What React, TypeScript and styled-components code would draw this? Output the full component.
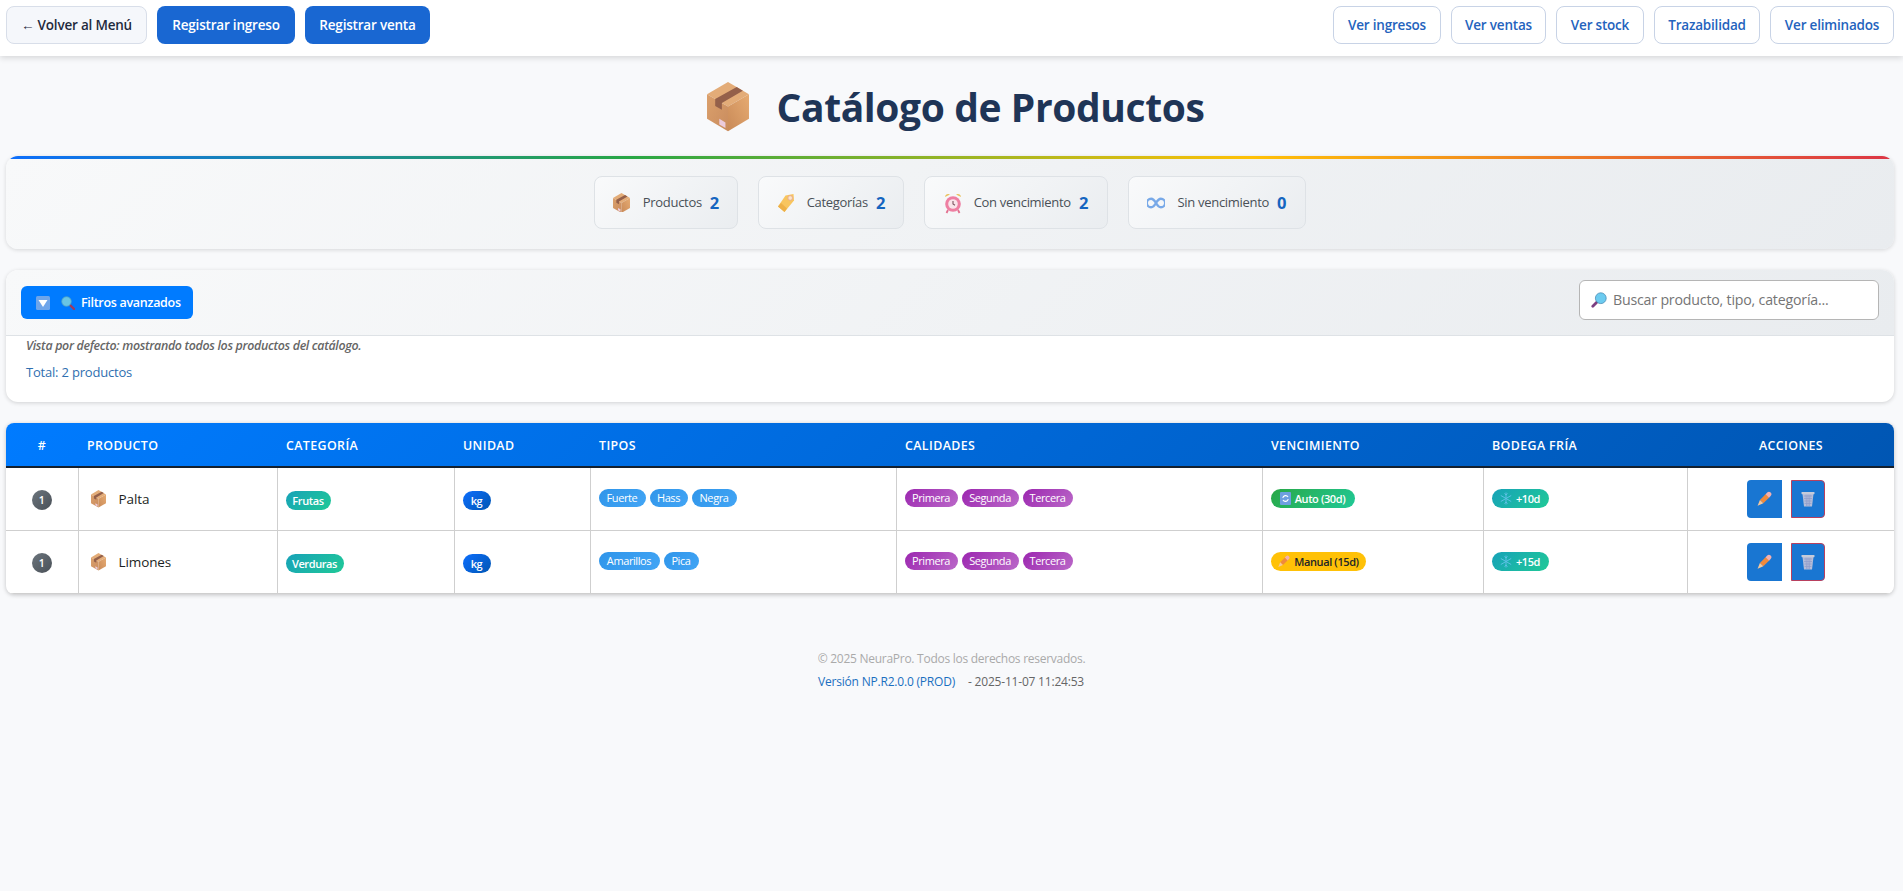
import React, { useId } from "react";
import styled, { createGlobalStyle } from "styled-components";

const FONT = `"Open Sans", "Noto Sans", "Liberation Sans", sans-serif`;

const Global = createGlobalStyle`
  html, body { margin: 0; padding: 0; background: #f8f9fb; }
  body { font-family: ${FONT}; color: #212529; min-height: 891px; }
  * { box-sizing: border-box; }
`;

const Page = styled.div`
  width: 1903px;
  min-height: 891px;
  background: #f8f9fb;
`;

const TopBar = styled.header`
  height: 56px;
  background: #fff;
  box-shadow: 0 2px 6px rgba(0, 0, 0, 0.14);
  display: flex;
  align-items: flex-start;
  justify-content: space-between;
  padding: 6px 9px 0 6px;
`;

const ButtonGroup = styled.div<{ $gap: number }>`
  display: flex;
  gap: ${(p) => p.$gap}px;
`;

const NavButton = styled.button<{ $kind: "back" | "primary" | "outline"; $w: number }>`
  height: 38px;
  width: ${(p) => p.$w}px;
  padding: 0;
  border-radius: 8px;
  font-family: ${FONT};
  font-size: 13.5px;
  font-weight: 600;
  letter-spacing: -0.2px;
  white-space: nowrap;
  background: ${(p) => (p.$kind === "back" ? "#f5f7fb" : p.$kind === "primary" ? "#1967d2" : "#fff")};
  color: ${(p) => (p.$kind === "back" ? "#1f2a3d" : p.$kind === "primary" ? "#fff" : "#2463bd")};
  border: ${(p) =>
    p.$kind === "back" ? "1px solid #d8dee9" : p.$kind === "primary" ? "none" : "1px solid #c8d3e6"};
`;

const TitleRow = styled.div`
  height: 100px;
  display: flex;
  align-items: center;
  justify-content: center;
  gap: 28px;
  padding: 2px 0 0 8px;
`;

const Title = styled.h1`
  margin: 0;
  font-size: 39px;
  font-weight: 700;
  letter-spacing: -0.4px;
  color: #1f3557;
  line-height: 50px;
`;

const Content = styled.main`
  padding: 0 9px 0 6px;
  display: flex;
  flex-direction: column;
  gap: 21px;
`;

const StatsPanel = styled.section`
  position: relative;
  height: 93px;
  border-radius: 12px;
  overflow: hidden;
  background: linear-gradient(135deg, #f8f9fa 0%, #e9ecef 100%);
  box-shadow: 0 1px 4px rgba(0, 0, 0, 0.14);
  display: flex;
  justify-content: center;
  gap: 20px;
  padding: 20px 0 0 0;
  &::before {
    content: "";
    position: absolute;
    left: 0;
    right: 0;
    top: 0;
    height: 3px;
    background: linear-gradient(90deg, #0d6efd 0%, #28a745 33%, #ffc107 66%, #dc3545 100%);
  }
`;

const StatChip = styled.div<{ $w: number }>`
  width: ${(p) => p.$w}px;
  height: 53px;
  border: 1px solid #dee2e6;
  border-radius: 8px;
  background: linear-gradient(135deg, #f9fafb 0%, #eaedf0 100%);
  display: flex;
  align-items: center;
  justify-content: center;
  gap: 8px;
`;

const StatIcon = styled.span`
  display: flex;
  width: 18px;
  justify-content: center;
  margin-right: 4px;
`;

const StatLabel = styled.span`
  font-size: 13px;
  font-weight: 500;
  letter-spacing: -0.3px;
  line-height: 18px;
  margin-top: -1px;
  color: #495057;
`;

const StatValue = styled.span`
  font-size: 16.5px;
  font-weight: 700;
  line-height: 20px;
  color: #1565c0;
`;

const FilterPanel = styled.section`
  height: 132px;
  border-radius: 12px;
  overflow: hidden;
  background: #fff;
  box-shadow: 0 1px 4px rgba(0, 0, 0, 0.16);
`;

const FilterHead = styled.div`
  height: 66px;
  display: flex;
  align-items: center;
  justify-content: space-between;
  padding: 0 15px;
  background: linear-gradient(135deg, #f8f9fa 0%, #e9ecef 100%);
  border-bottom: 1px solid #dee2e6;
`;

const FilterButton = styled.button`
  width: 172px;
  height: 33px;
  border: none;
  border-radius: 6px;
  background: #007bff;
  color: #fff;
  font-family: ${FONT};
  font-size: 12.5px;
  font-weight: 600;
  letter-spacing: -0.3px;
  display: flex;
  align-items: center;
  padding: 0 0 0 15px;
  gap: 6px;
  white-space: nowrap;
`;

const Caret = styled.span`
  display: flex;
  margin-right: 5px;
`;

const SearchBox = styled.label`
  width: 300px;
  height: 40px;
  margin-top: -6px;
  background: #fff;
  border: 1px solid #b5b5b5;
  border-radius: 6px;
  display: flex;
  align-items: center;
  padding-left: 11px;
  gap: 6px;
`;

const SearchInput = styled.input`
  flex: 1;
  min-width: 0;
  border: none;
  outline: none;
  background: transparent;
  font-family: ${FONT};
  font-size: 14.2px;
  letter-spacing: -0.2px;
  padding: 0;
  &::placeholder {
    color: #757575;
    opacity: 1;
  }
`;

const FilterBody = styled.div`
  padding: 1px 20px 0;
`;

const Hint = styled.div`
  font-size: 12.4px;
  font-style: italic;
  font-weight: 600;
  letter-spacing: -0.32px;
  line-height: 17px;
  color: #666;
`;

const Total = styled.div`
  margin-top: 10px;
  font-size: 13px;
  font-weight: 500;
  letter-spacing: -0.2px;
  line-height: 17px;
  color: #2f6fb0;
`;

const TableWrap = styled.div`
  border-radius: 8px;
  overflow: hidden;
  box-shadow: 0 1px 4px rgba(0, 0, 0, 0.22);
  background: #fff;
`;

const Table = styled.table`
  width: 100%;
  border-collapse: collapse;
  table-layout: fixed;
`;

const HeadRow = styled.tr`
  height: 44px;
  background: linear-gradient(135deg, #007bff 0%, #0056b3 100%);
`;

const Th = styled.th<{ $center?: boolean }>`
  padding: 1px 0 0 9px;
  border-bottom: 2px solid #14202e;
  color: #fff;
  font-size: 12.4px;
  font-weight: 600;
  letter-spacing: 0.4px;
  text-transform: uppercase;
  text-align: ${(p) => (p.$center ? "center" : "left")};
  ${(p) => (p.$center ? "padding-left: 0;" : "")}
`;

const Td = styled.td<{ $center?: boolean }>`
  height: 63px;
  padding: 0 0 0 8px;
  border: 1px solid #cfcfcf;
  text-align: ${(p) => (p.$center ? "center" : "left")};
  ${(p) => (p.$center ? "padding-left: 0;" : "")}
  &:first-child { border-left: none; }
  &:last-child { border-right: none; }
`;

const Num = styled.span`
  display: inline-flex;
  width: 20px;
  height: 20px;
  border-radius: 50%;
  align-items: center;
  justify-content: center;
  background: linear-gradient(135deg, #6c757d 0%, #495057 100%);
  color: #fff;
  font-size: 10.5px;
  font-weight: 600;
`;

const ProductCell = styled.div`
  display: flex;
  align-items: center;
  gap: 13px;
  padding: 1px 0 0 4px;
  font-size: 13.5px;
  font-weight: 500;
  letter-spacing: -0.1px;
  color: #1c1f23;
`;

const Pill = styled.span<{ $bg: string; $dark?: boolean; $w: number }>`
  display: inline-flex;
  align-items: center;
  justify-content: center;
  gap: 4px;
  height: 19px;
  width: ${(p) => p.$w}px;
  border-radius: 10px;
  background: ${(p) => p.$bg};
  color: ${(p) => (p.$dark ? "#212529" : "#fff")};
  font-size: 11px;
  font-weight: 600;
  letter-spacing: -0.4px;
  white-space: nowrap;
`;

const PillRow = styled.div`
  display: flex;
  gap: 4px;
  margin-top: -2px;
`;

const SmallPill = styled(Pill)`
  height: 18px;
  font-weight: 500;
`;

const Actions = styled.div`
  display: flex;
  justify-content: center;
  gap: 9px;
  padding-right: 11px;
`;

const ActionButton = styled.button<{ $danger?: boolean; $w: number }>`
  width: ${(p) => p.$w}px;
  height: 38px;
  padding: 0;
  background: #1976d2;
  display: flex;
  align-items: center;
  justify-content: center;
  border: ${(p) => (p.$danger ? "1px solid #b8405e" : "none")};
  border-radius: ${(p) => (p.$danger ? "0 4px 4px 0" : "4px 0 0 4px")};
`;

const Footer = styled.footer`
  margin-top: 56px;
  display: flex;
  flex-direction: column;
  align-items: center;
  gap: 6px;
`;

const Copy = styled.div`
  font-size: 12px;
  letter-spacing: -0.27px;
  line-height: 17px;
  color: #aaa;
`;

const Version = styled.div`
  display: flex;
  gap: 13px;
  padding-right: 1px;
  font-size: 12px;
  letter-spacing: -0.2px;
  line-height: 17px;
  color: #666;
`;

const VersionTag = styled.span`
  color: #1a6fc0;
  font-weight: 500;
`;

/* ---------- drawings ---------- */

const BoxIcon = ({ size }: { size: number }) => {
  const id = useId();
  return (
    <svg width={size} height={size * 1.17} viewBox="0 0 41 48" aria-hidden="true">
      <defs>
        <linearGradient id={id + "r"} x1="0" y1="1" x2="1" y2="0">
          <stop offset="0" stopColor="#c98a58" />
          <stop offset="1" stopColor="#e6ab72" />
        </linearGradient>
        <linearGradient id={id + "l"} x1="0" y1="0" x2="1" y2="1">
          <stop offset="0" stopColor="#dba06c" />
          <stop offset="1" stopColor="#c98c5e" />
        </linearGradient>
      </defs>
      <polygon points="20.5,0 41,12 20.5,24 0,12" fill="#e3ac78" />
      <polygon points="0,12 20.5,24 20.5,48 0,36" fill={`url(#${id}l)`} />
      <polygon points="41,12 20.5,24 20.5,48 41,36" fill={`url(#${id}r)`} />
      <polygon points="29,5 35,8.5 14.5,20.5 14.5,27 8,23.5 8,16.5" fill="#94604a" />
      <polygon points="12,36 18,39.5 18,45 12,41.5" fill="#eccbdc" />
    </svg>
  );
};

const TagIcon = () => (
  <svg width="18" height="20" viewBox="0 0 18 20" aria-hidden="true">
    <path d="M8.5 2.5 L16.5 1 L17 7.5 L7.5 19 L1 13.5 Z" fill="#f8c55f" />
    <path d="M7.5 19 L1 13.5 L4 10 L10 15.5 Z" fill="#eeb047" />
    <circle cx="13.2" cy="5" r="2.3" fill="#fbe7c6" stroke="#e3a3a0" strokeWidth="0.8" />
  </svg>
);

const AlarmIcon = () => (
  <svg width="18" height="22" viewBox="0 0 18 22" aria-hidden="true">
    <path d="M1 5 a3.4 3.4 0 0 1 5-2.6 Z" fill="#eac05a" />
    <path d="M17 5 a3.4 3.4 0 0 0-5-2.6 Z" fill="#eac05a" />
    <path d="M4 18 L2.5 21 M14 18 L15.5 21" stroke="#e2708f" strokeWidth="1.8" />
    <circle cx="9" cy="12" r="7.8" fill="#ee7fa2" />
    <circle cx="9" cy="12" r="4.8" fill="#f9e4ea" />
    <path d="M9 9 V12 L11 13.2" stroke="#7d5560" strokeWidth="1.1" fill="none" />
  </svg>
);

const InfinityIcon = () => (
  <svg width="19" height="12" viewBox="0 0 19 12" aria-hidden="true">
    <path
      d="M9.5 6 C7.5 2.5 6 1.5 4.3 1.5 A4.5 4.5 0 0 0 4.3 10.5 C6 10.5 7.5 9.5 9.5 6 C11.5 2.5 13 1.5 14.7 1.5 A4.5 4.5 0 0 1 14.7 10.5 C13 10.5 11.5 9.5 9.5 6 Z"
      fill="none"
      stroke="#78a9e8"
      strokeWidth="2.5"
    />
  </svg>
);

const DownButton = () => (
  <svg width="14" height="14" viewBox="0 0 14 14" aria-hidden="true">
    <rect width="14" height="14" rx="1.5" fill="#6ea5ea" />
    <polygon points="2.5,4 11.5,4 7,11" fill="#fff" />
  </svg>
);

const MagLeft = () => (
  <svg width="14" height="14" viewBox="0 0 14 14" aria-hidden="true">
    <path d="M8.5 8.5 L13 13" stroke="#a13a5e" strokeWidth="2.4" strokeLinecap="round" />
    <circle cx="5.5" cy="5.5" r="4.8" fill="#69c5e4" stroke="#4d9fc4" strokeWidth="0.8" />
  </svg>
);

const MagRight = () => (
  <svg width="16" height="16" viewBox="0 0 16 16" aria-hidden="true">
    <path d="M6.5 9.5 L1.8 14.2" stroke="#7c3f80" strokeWidth="2.8" strokeLinecap="round" />
    <circle cx="9.8" cy="6.2" r="5.4" fill="#6ccbf0" stroke="#4a8fb8" strokeWidth="0.8" />
  </svg>
);

const RepeatIcon = () => (
  <svg width="11" height="13" viewBox="0 0 11 13" aria-hidden="true">
    <rect width="11" height="13" rx="1" fill="#6e9fe0" />
    <path d="M2.8 6 A2.8 2.8 0 0 1 8 5 M8.2 7 A2.8 2.8 0 0 1 3 8" fill="none" stroke="#fff" strokeWidth="1.1" />
  </svg>
);

const Snow = () => (
  <svg width="12" height="13" viewBox="0 0 12 13" aria-hidden="true">
    <path
      d="M6 .5 V12.5 M.8 3.5 L11.2 9.5 M11.2 3.5 L.8 9.5 M4.5 1.5 L6 3 L7.5 1.5 M4.5 11.5 L6 10 L7.5 11.5"
      stroke="#5cc0e4"
      strokeWidth="1"
      fill="none"
    />
  </svg>
);

const PencilIcon = ({ size }: { size: number }) => (
  <svg width={size} height={size} viewBox="0 0 14 14" aria-hidden="true">
    <path d="M3.4 7.8 L8.6 2.6 L11.6 5.6 L6.4 10.8 Z" fill="#f08a3c" />
    <path d="M8.4 2.8 L9.8 1.4 A1.6 1.6 0 0 1 12.8 4.4 L11.4 5.8 Z" fill="#f3b0b0" />
    <path d="M3.4 7.8 L6.4 10.8 L1.4 13 Z" fill="#f5c79a" />
  </svg>
);

const TrashIcon = () => (
  <svg width="14" height="16" viewBox="0 0 14 16" aria-hidden="true">
    <path d="M1.5 3 H12.5 L11 15.5 H3 Z" fill="#b4bdd8" />
    <path
      d="M3 5 H11 M3 7.5 H11 M3.4 10 H10.6 M3.6 12.5 H10.4 M5 3.5 L5.6 15 M7 3.5 V15 M9 3.5 L8.4 15"
      stroke="#8f9ccb"
      strokeWidth="0.7"
    />
    <rect x="0.5" y="1" width="13" height="2.2" rx="0.6" fill="#c6cbd9" />
  </svg>
);

/* ---------- data ---------- */

const COLS = [72, 199, 177, 136, 306, 366, 221, 204, 208];
const HEADS = ["#", "Producto", "Categoría", "Unidad", "Tipos", "Calidades", "Vencimiento", "Bodega fría", "Acciones"];

const TEAL = "linear-gradient(135deg, #17a2b8 0%, #20c997 100%)";
const BLUE = "linear-gradient(135deg, #0d6efd 0%, #0056b3 100%)";
const SKY = "linear-gradient(135deg, #2f95ea 0%, #42a5f5 100%)";
const PURPLE = "linear-gradient(135deg, #9c27b0 0%, #ba68c8 100%)";
const GREEN = "linear-gradient(135deg, #28a745 0%, #20c997 100%)";

const QUALITIES: [string, number][] = [["Primera", 53], ["Segunda", 57], ["Tercera", 50]];

const ROWS = [
  {
    name: "Palta",
    cat: ["Frutas", 45] as [string, number],
    types: [["Fuerte", 47], ["Hass", 38], ["Negra", 45]] as [string, number][],
    exp: <Pill $bg={GREEN} $w={84}><RepeatIcon />Auto (30d)</Pill>,
    cold: "+10d",
  },
  {
    name: "Limones",
    cat: ["Verduras", 58] as [string, number],
    types: [["Amarillos", 61], ["Pica", 35]] as [string, number][],
    exp: <Pill $bg="#ffc107" $dark $w={95}><PencilIcon size={13} />Manual (15d)</Pill>,
    cold: "+15d",
  },
];

const STATS = [
  { icon: <BoxIcon size={17} />, label: "Productos", value: 2, w: 144 },
  { icon: <TagIcon />, label: "Categorías", value: 2, w: 146 },
  { icon: <AlarmIcon />, label: "Con vencimiento", value: 2, w: 184 },
  { icon: <InfinityIcon />, label: "Sin vencimiento", value: 0, w: 178 },
];

export default function App() {
  return (
    <Page>
      <Global />
      <TopBar>
        <ButtonGroup $gap={10}>
          <NavButton $kind="back" $w={141}>← Volver al Menú</NavButton>
          <NavButton $kind="primary" $w={138}>Registrar ingreso</NavButton>
          <NavButton $kind="primary" $w={125}>Registrar venta</NavButton>
        </ButtonGroup>
        <ButtonGroup $gap={10}>
          <NavButton $kind="outline" $w={108}>Ver ingresos</NavButton>
          <NavButton $kind="outline" $w={95}>Ver ventas</NavButton>
          <NavButton $kind="outline" $w={88}>Ver stock</NavButton>
          <NavButton $kind="outline" $w={106}>Trazabilidad</NavButton>
          <NavButton $kind="outline" $w={124}>Ver eliminados</NavButton>
        </ButtonGroup>
      </TopBar>

      <TitleRow>
        <BoxIcon size={42} />
        <Title>Catálogo de Productos</Title>
      </TitleRow>

      <Content>
        <StatsPanel>
          {STATS.map((s) => (
            <StatChip key={s.label} $w={s.w}>
              <StatIcon>{s.icon}</StatIcon>
              <StatLabel>{s.label}</StatLabel>
              <StatValue>{s.value}</StatValue>
            </StatChip>
          ))}
        </StatsPanel>

        <FilterPanel>
          <FilterHead>
            <FilterButton>
              <Caret><DownButton /></Caret>
              <MagLeft />
              Filtros avanzados
            </FilterButton>
            <SearchBox>
              <MagRight />
              <SearchInput placeholder="Buscar producto, tipo, categoría..." />
            </SearchBox>
          </FilterHead>
          <FilterBody>
            <Hint>Vista por defecto: mostrando todos los productos del catálogo.</Hint>
            <Total>Total: 2 productos</Total>
          </FilterBody>
        </FilterPanel>

        <TableWrap>
          <Table>
            <colgroup>
              {COLS.map((w, i) => (
                <col key={i} width={w} />
              ))}
            </colgroup>
            <thead>
              <HeadRow>
                {HEADS.map((h, i) => (
                  <Th key={h} $center={i === 0 || i === 8}>{h}</Th>
                ))}
              </HeadRow>
            </thead>
            <tbody>
              {ROWS.map((r) => (
                <tr key={r.name}>
                  <Td $center><Num>1</Num></Td>
                  <Td>
                    <ProductCell>
                      <BoxIcon size={15} />
                      {r.name}
                    </ProductCell>
                  </Td>
                  <Td><Pill $bg={TEAL} $w={r.cat[1]}>{r.cat[0]}</Pill></Td>
                  <Td><Pill $bg={BLUE} $w={28}>kg</Pill></Td>
                  <Td>
                    <PillRow>
                      {r.types.map(([t, w]) => (
                        <SmallPill key={t} $bg={SKY} $w={w}>{t}</SmallPill>
                      ))}
                    </PillRow>
                  </Td>
                  <Td>
                    <PillRow>
                      {QUALITIES.map(([q, w]) => (
                        <SmallPill key={q} $bg={PURPLE} $w={w}>{q}</SmallPill>
                      ))}
                    </PillRow>
                  </Td>
                  <Td>{r.exp}</Td>
                  <Td><Pill $bg={TEAL} $w={57}><Snow />{r.cold}</Pill></Td>
                  <Td $center>
                    <Actions>
                      <ActionButton $w={35}><PencilIcon size={16} /></ActionButton>
                      <ActionButton $danger $w={34}><TrashIcon /></ActionButton>
                    </Actions>
                  </Td>
                </tr>
              ))}
            </tbody>
          </Table>
        </TableWrap>
      </Content>

      <Footer>
        <Copy>© 2025 NeuraPro. Todos los derechos reservados.</Copy>
        <Version>
          <VersionTag>Versión NP.R2.0.0 (PROD)</VersionTag>
          <span>- 2025-11-07 11:24:53</span>
        </Version>
      </Footer>
    </Page>
  );
}
